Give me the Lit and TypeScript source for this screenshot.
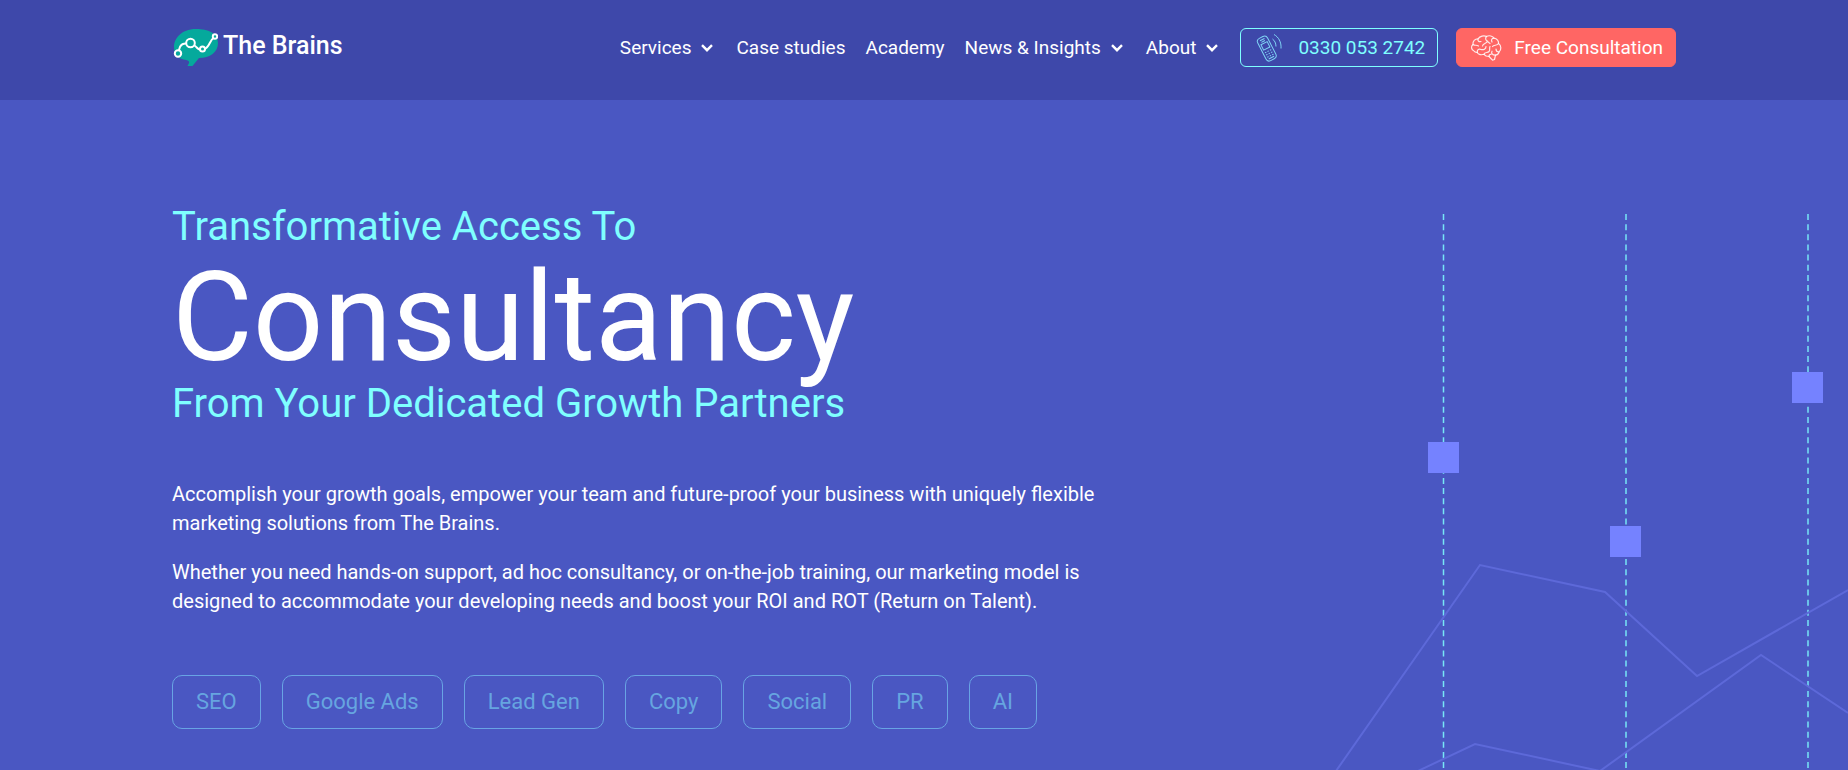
import { LitElement, html, css, svg, nothing } from "lit";
import { customElement } from "lit/decorators.js";

interface NavItem {
  label: string;
  menu?: boolean;
}

const NAV: NavItem[] = [
  { label: "Services", menu: true },
  { label: "Case studies" },
  { label: "Academy" },
  { label: "News & Insights", menu: true },
  { label: "About", menu: true },
];

const TAGS = ["SEO", "Google Ads", "Lead Gen", "Copy", "Social", "PR", "AI"];

const SLIDERS = [
  { x: 123.5, y: 342 },
  { x: 306, y: 426 },
  { x: 488, y: 272 },
];

@customElement("site-header")
export class SiteHeader extends LitElement {
  static styles = css`
    :host {
      display: block;
      background: #3e48aa;
    }
    .bar {
      box-sizing: border-box;
      max-width: 1544px;
      min-height: 100px;
      margin: 0 auto;
      padding: 28px 20px;
      display: flex;
      align-items: flex-start;
      justify-content: space-between;
      gap: 20px;
    }
    a {
      color: inherit;
      text-decoration: none;
    }
    .brand {
      display: flex;
      gap: 5px;
      color: #fff;
      font-size: 25px;
      font-weight: 500;
      line-height: 36px;
    }
    .right {
      display: flex;
      align-items: center;
      gap: 18px;
      font-size: 19px;
    }
    .nav {
      display: flex;
      align-items: center;
      gap: 20px;
      margin-right: 1px;
      color: #fff;
    }
    .item {
      display: flex;
      align-items: center;
      gap: 10px;
      white-space: nowrap;
    }
    .chevron {
      margin-right: 3px;
    }
    .button {
      box-sizing: border-box;
      height: 39px;
      padding: 0 12px 0 13px;
      display: flex;
      align-items: center;
      gap: 12px;
      border: 1px solid #7fffff;
      border-radius: 6px;
      color: #7fffff;
      white-space: nowrap;
    }
    .cta {
      border-color: #ff6664;
      background: #ff6664;
      color: #fff;
    }
  `;

  private chevron() {
    return html`<svg class="chevron" width="12" height="8" viewBox="0 0 12 8" fill="none" stroke="#fff" stroke-width="2.400" aria-hidden="true">
      <path d="M1 1.200 6 6.200 11 1.200" />
    </svg>`;
  }

  private logo() {
    return html`<svg width="46" height="40" viewBox="0 0 46 40" fill="none" aria-hidden="true">
      <path fill="#05a99c" d="M24 1C9 1 2 11 2 19C2 27 7 31 14 32Q18 33 17 35L15.500 38L20.500 38L27 30C38 30 46 24 46 15C46 5 36 1 24 1Z" />
      <path stroke="#fff" stroke-width="2" d="M7 22C8 16 11 16 14 15.500M22.500 17.500C25 19 26 22 28 21.500M32.500 21C37 20 38 12 41.500 10" />
      <g fill="#05a99c" stroke="#fff" stroke-width="2">
        <circle cx="6" cy="25.500" r="3.200" />
        <circle cx="18.500" cy="15" r="4.300" />
        <circle cx="30.500" cy="21" r="2.500" />
        <circle cx="43" cy="8.500" r="2.200" />
      </g>
    </svg>`;
  }

  private phone() {
    return html`<svg width="32" height="30" viewBox="0 0 32 30" fill="none" stroke="#7fd4f5" aria-hidden="true">
      <g transform="rotate(-27 13 16)">
        <rect x="7.500" y="3" width="11" height="25" rx="3.500" />
        <rect x="9.500" y="9.500" width="7" height="6" />
        <path d="M10.500 5.500H15.500M11 7.500H15M9.500 18.500H11M12.300 18.500H13.700M15 18.500H16.500M9.500 21H11M12.300 21H13.700M15 21H16.500M9.500 23.500H11M12.300 23.500H13.700M15 23.500H16.500M10 25.700H16" />
      </g>
      <path d="M18.500 6C20.500 7.500 22 10 22 13.500M20 1.500C24.500 4 27.500 9 27 15.500" />
    </svg>`;
  }

  private brain() {
    return html`<svg width="32" height="28" viewBox="0 0 32 28" fill="none" stroke="#fff" stroke-opacity="0.850" stroke-width="1.200" stroke-linecap="round" stroke-linejoin="round" aria-hidden="true">
      <path d="M4 17C1 16 .8 12 3 10.500C2.500 7 5 4.800 8 4.800C10 2 14 1.200 16.500 2.500C19 1 23 2 24 4.200C27 4.500 29 7 28.500 9.500C31.500 11.500 31.500 16 29 18C28.500 20 27 21 25.500 21.200L24.500 25.500L22.500 26.200L19 22.500C16.500 22.500 14.800 21.500 14 20.300C10.500 21.500 7.500 20 7.300 18.300C6 18.500 4.700 18 4 17Z" />
      <path d="M3 10.500C5 12 6.500 10.500 8.500 12M8 4.800C7.500 7 9 8 11 7.500M16.500 2.500C15 4 15.500 6.500 17.500 7C16.500 10 13 9 12.500 12M24 4.200C21.500 4.500 21 6 22 8M28.500 9.500C27 12 24 10.500 22.500 12.500M7.300 18.300C7 15.500 9 14.500 11 15.500C13.500 16.200 16 15 16 12.500M14 20.300C14.500 18 17.500 19 19 17.500C20.500 16 19 14 20 12.500M25.500 21.200C22 21 21 19 22 17.200M29 18C27.500 18 26 17 26 15M20 9.500C19 8.800 18 8.500 17.500 7M19 22.500C18.800 21 20 20.300 21.500 20" />
    </svg>`;
  }

  render() {
    return html`
      <header class="bar">
        <a class="brand" href="#">${this.logo()}<span>The Brains</span></a>
        <div class="right">
          <nav class="nav" aria-label="Main">
            ${NAV.map(
              (item) => html`<a class="item" href="#"><span>${item.label}</span>${item.menu ? this.chevron() : nothing}</a>`
            )}
          </nav>
          <a class="button" href="tel:03300532742">${this.phone()}<span>0330 053 2742</span></a>
          <a class="button cta" href="#">${this.brain()}<span>Free Consultation</span></a>
        </div>
      </header>
    `;
  }
}

@customElement("hero-chart")
export class HeroChart extends LitElement {
  static styles = css`
    :host {
      display: block;
      overflow: hidden;
    }
    .canvas {
      display: block;
    }
  `;

  render() {
    return html`<svg class="canvas" width="528" height="670" viewBox="0 0 528 670" fill="none" aria-hidden="true">
      ${SLIDERS.map(
        (s) => svg`<line x1=${s.x} x2=${s.x} y1="114" y2="670" stroke="#7fffff" stroke-opacity="0.85" stroke-width="1.500" stroke-dasharray="6 4.150" />`
      )}
      <g stroke="#5d69d9" stroke-width="2">
        <path d="M16 671 160 465 285 492 377 576 528 490" />
        <path d="M98 671 155 644 280 671 441 555 528 613" />
      </g>
      ${SLIDERS.map((s) => svg`<rect x=${Math.round(s.x) - 16} y=${s.y} width="31" height="31" fill="#7582ff" />`)}
    </svg>`;
  }
}

@customElement("app-root")
export class AppRoot extends LitElement {
  static styles = css`
    :host {
      display: flex;
      flex-direction: column;
      min-height: 100vh;
      background: #4a57c2;
      color: #fff;
      font-family: Roboto, "Liberation Sans", sans-serif;
      font-size: 20px;
      line-height: 29px;
    }
    .hero {
      flex: 1;
      display: grid;
      grid-template-columns: minmax(0, 1fr);
    }
    .chart {
      grid-area: 1 / 1;
      justify-self: end;
    }
    .content {
      grid-area: 1 / 1;
      box-sizing: border-box;
      width: 100%;
      max-width: 1544px;
      margin: 0 auto;
      padding: 100px 20px 39px;
      z-index: 1;
    }
    .title {
      margin: 0;
      display: flex;
      flex-direction: column;
      font-weight: 400;
      color: #7fffff;
      font-size: 40px;
      line-height: 54px;
    }
    .big {
      margin-top: 4px;
      color: #fff;
      font-size: 124px;
      line-height: 119px;
    }
    .copy {
      max-width: 940px;
      margin-top: 49px;
    }
    .copy p {
      margin: 0 0 20px;
    }
    .tags {
      display: flex;
      flex-wrap: wrap;
      gap: 21px;
      margin: 59px 0 0;
      padding: 0;
      list-style: none;
    }
    .tag {
      display: block;
      padding: 0 23px;
      border: 1px solid #68a4e4;
      border-radius: 10px;
      color: #66a5e0;
      font-size: 22px;
      line-height: 52px;
      text-decoration: none;
    }
  `;

  render() {
    return html`
      <site-header></site-header>
      <main class="hero">
        <hero-chart class="chart"></hero-chart>
        <section class="content">
          <h1 class="title">
            <span>Transformative Access To</span>
            <span class="big">Consultancy</span>
            <span>From Your Dedicated Growth Partners</span>
          </h1>
          <div class="copy">
            <p>
              Accomplish your growth goals, empower your team and future-proof your business with uniquely flexible
              marketing solutions from The Brains.
            </p>
            <p>
              Whether you need hands-on support, ad hoc consultancy, or on-the-job training, our marketing model is
              designed to accommodate your developing needs and boost your ROI and ROT (Return on Talent).
            </p>
          </div>
          <ul class="tags">
            ${TAGS.map((tag) => html`<li><a class="tag" href="#">${tag}</a></li>`)}
          </ul>
        </section>
      </main>
    `;
  }
}
